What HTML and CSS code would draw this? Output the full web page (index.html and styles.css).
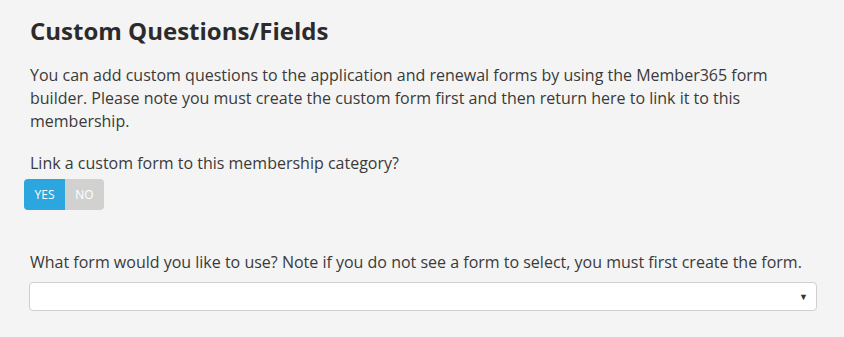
FILE: index.html
```html
<!DOCTYPE html>
<html>
<head>
<meta charset="utf-8">
<link rel="stylesheet" href="styles.css">
</head>
<body>
<div class="section">
  <h2 class="title">Custom Questions/Fields</h2>
  <p class="intro">You can add custom questions to the application and renewal forms by using the Member365 form builder. Please note you must create the custom form first and then return here to link it to this membership.</p>
  <div class="field">
    <label class="label">Link a custom form to this membership category?</label>
    <div class="toggle">
      <span class="opt opt-yes">YES</span>
      <span class="opt opt-no">NO</span>
    </div>
  </div>
  <div class="field field-select">
    <label class="label">What form would you like to use? Note if you do not see a form to select, you must first create the form.</label>
    <div class="select">
      <span class="caret">&#9660;</span>
    </div>
  </div>
</div>
</body>
</html>
```
FILE: styles.css
```css
html, body {
  margin: 0;
  padding: 0;
  background: #f4f4f4;
}
body {
  font-family: "Open Sans", "Liberation Sans", sans-serif;
  color: #333;
}
.section {
  padding: 14px 27px 0 30px;
}
.title {
  margin: 0;
  font-size: 24px;
  font-weight: 700;
  line-height: 34px;
  color: #2b2b2b;
}
.intro {
  margin: 16px 0 0;
  max-width: 760px;
  font-size: 16px;
  line-height: 22.8px;
  color: #3a3a3a;
}
.field {
  margin-top: 20px;
}
.label {
  display: block;
  font-size: 16px;
  line-height: 22.8px;
  color: #3a3a3a;
}
.toggle {
  display: inline-flex;
  margin: 4px 0 0 -6px;
  height: 31px;
  border-radius: 4px;
  overflow: hidden;
}
.opt {
  display: flex;
  align-items: center;
  justify-content: center;
  width: 41px;
  font-size: 12px;
  color: #fff;
}
.opt-yes {
  background: #2ba6de;
}
.opt-no {
  width: 39px;
  background: #d1d1cf;
}
.field-select {
  margin-top: 41px;
}
.select {
  margin: 8px 0 0 -1px;
  height: 27px;
  background: #fff;
  border: 1px solid #cfcfcf;
  border-radius: 4px;
  display: flex;
  align-items: center;
  justify-content: flex-end;
}
.caret {
  font-size: 9px;
  color: #333;
  margin-right: 8px;
}
```
